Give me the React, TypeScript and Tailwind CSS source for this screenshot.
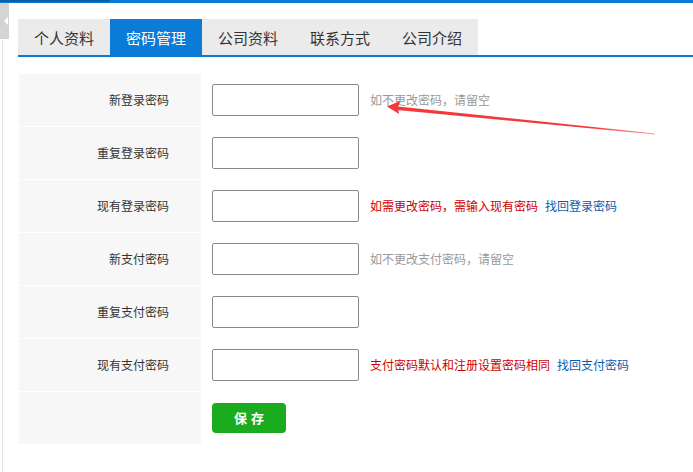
import { useState } from "react";

const TABS = ["个人资料", "密码管理", "公司资料", "联系方式", "公司介绍"];

type Row = {
  label: string;
  hint?: string;
  warn?: string;
  link?: string;
};

const ROWS: Row[] = [
  { label: "新登录密码", hint: "如不更改密码，请留空" },
  { label: "重复登录密码" },
  { label: "现有登录密码", warn: "如需更改密码，需输入现有密码", link: "找回登录密码" },
  { label: "新支付密码", hint: "如不更改支付密码，请留空" },
  { label: "重复支付密码" },
  { label: "现有支付密码", warn: "支付密码默认和注册设置密码相同", link: "找回支付密码" },
];

export default function App() {
  const [active, setActive] = useState(1);

  return (
    <div className="relative w-[693px] h-[472px] overflow-hidden bg-white font-['Noto_Sans_CJK_SC','Microsoft_YaHei',sans-serif] text-[#333]">
      {/* top bar */}
      <div className="flex h-[3px] bg-[#0a7bd6]">
        <div className="w-[110px] h-[2px] bg-[#0b5ea6]" />
      </div>

      {/* sidebar toggle */}
      <div className="absolute left-0 top-[3px] w-[9px] h-[36px] bg-[#d4d4d4] flex items-center justify-end pr-[1px]">
        <span className="block w-0 h-0 border-y-[4px] border-y-transparent border-r-[4px] border-r-white" />
      </div>
      <div className="absolute left-[2px] top-[39px] bottom-0 w-px bg-[#e2e2e2]" />

      <div className="pl-[18px] pt-[16px]">
        {/* tabs */}
        <div className="flex border-b-2 border-[#0a7bd6]">
          {TABS.map((t, i) => (
            <button
              key={t}
              onClick={() => setActive(i)}
              className={`w-[92px] h-[36px] text-[15px] leading-none ${
                i === active ? "bg-[#0a7bd6] text-white" : "bg-[#ebebeb] text-[#333]"
              }`}
            >
              {t}
            </button>
          ))}
        </div>

        {/* form */}
        <div className="mt-[17px] ml-px">
          {ROWS.map((r) => (
            <div key={r.label} className="flex h-[53px]">
              <div className="w-[182px] bg-[#f7f7f7] border-b border-white flex items-center justify-end pr-[32px] text-[12px] text-[#333]">
                {r.label}
              </div>
              <div className="flex items-center pl-[11px] pb-px text-[12px]">
                <input
                  type="password"
                  className="w-[147px] h-[32px] border border-[#8a8a8a] rounded-[2px] outline-none px-2"
                />
                {r.hint && <span className="ml-[11px] text-[#999]">{r.hint}</span>}
                {r.warn && <span className="ml-[11px] text-[#cc0000]">{r.warn}</span>}
                {r.link && <a className="ml-[7px] text-[#0b5cab] cursor-pointer">{r.link}</a>}
              </div>
            </div>
          ))}
          <div className="flex h-[52px]">
            <div className="w-[182px] bg-[#f7f7f7]" />
            <div className="flex items-center pl-[11px] pb-px">
              <button className="w-[74px] h-[30px] rounded-[4px] bg-[#1aab1f] text-white text-[13px] font-bold tracking-[4px] pl-[4px]">
                保存
              </button>
            </div>
          </div>
        </div>
      </div>

      {/* annotation arrow */}
      <svg className="absolute left-0 top-0 pointer-events-none" width="693" height="472">
        <defs>
          <linearGradient id="tail" x1="398" y1="0" x2="655" y2="0" gradientUnits="userSpaceOnUse">
            <stop offset="0" stopColor="#f23a3a" />
            <stop offset="0.75" stopColor="#f23a3a" />
            <stop offset="1" stopColor="#f8a0a0" />
          </linearGradient>
        </defs>
        <polygon points="398,106.5 655,133.6 655,134.4 397,110" fill="url(#tail)" />
        <polygon points="387,106.5 400,101 398,107.5 399,114" fill="#f23a3a" />
      </svg>
    </div>
  );
}
